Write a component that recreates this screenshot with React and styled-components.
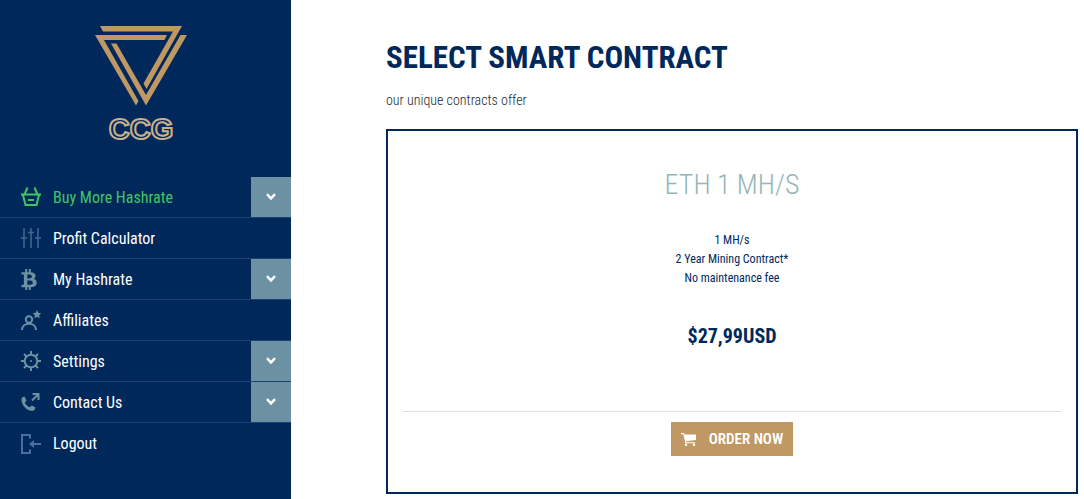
import React from 'react'
import styled, { createGlobalStyle } from 'styled-components'
import { FaBtc } from 'react-icons/fa'

const navy = '#00285b'
const teal = '#6b91a2'
const gold = '#bf9864'

const GlobalStyle = createGlobalStyle`
  * {
    box-sizing: border-box;
  }

  body {
    margin: 0;
    background: #fff;
    color: ${navy};
    font-family: 'Roboto Condensed', 'Liberation Sans Narrow', 'Liberation Sans', sans-serif;
  }
`

const Layout = styled.div`
  display: flex;
  min-height: 100vh;
`

const Sidebar = styled.aside`
  flex: 0 0 291px;
  background: ${navy};
`

const LogoLink = styled.a`
  display: flex;
  justify-content: center;
  padding: 25px 9px 20px 0;
`

const LogoText = styled.text`
  font-family: 'Liberation Sans', sans-serif;
  font-size: 29px;
  font-weight: 700;
  fill: ${navy};
  stroke: #c9b08a;
  stroke-width: 2px;
`

const Menu = styled.ul`
  margin: 0;
  padding: 0;
  list-style: none;
`

const MenuRow = styled.li`
  display: flex;
  height: 41px;
  border-bottom: 1px solid #1b4273;

  &:last-child {
    border-bottom: 0;
  }
`

const MenuLink = styled.a`
  display: flex;
  flex: 1;
  align-items: center;
  gap: 12px;
  padding-left: 21px;
  color: ${props => (props.$active ? '#41c565' : '#fff')};
  font-size: 16px;
  text-decoration: none;
`

const IconSlot = styled.span`
  display: flex;
  align-items: center;
  width: 20px;
  height: 20px;
  color: ${props => props.$color || teal};
`

const BitcoinIcon = styled(FaBtc)`
  width: 16px;
  height: 21px;
`

const Toggle = styled.button`
  display: flex;
  width: 40px;
  align-items: center;
  justify-content: center;
  padding: 0;
  border: 0;
  background: ${teal};
  cursor: pointer;
`

const Main = styled.main`
  flex: 1;
  padding: 38px 6px 6px 95px;
`

const Title = styled.h1`
  margin: 0;
  font-size: 31px;
  line-height: 40px;
  text-transform: uppercase;
`

const Subtitle = styled.p`
  margin: 12px 0 19px;
  color: #23282f;
  font-size: 14px;
  font-weight: 300;
  line-height: 20px;
`

const Card = styled.section`
  padding: 36px 15px;
  border: 2px solid ${navy};
  text-align: center;
`

const CardTitle = styled.h2`
  margin: 0;
  color: #94b6b6;
  font-size: 28px;
  font-weight: 300;
  line-height: 36px;
`

const Specs = styled.ul`
  margin: 28px 0 36px;
  padding: 0;
  font-size: 12px;
  line-height: 19px;
  list-style: none;
`

const Price = styled.p`
  margin: 0;
  font-size: 20px;
  font-weight: 700;
  line-height: 24px;
`

const Divider = styled.hr`
  margin: 63px 0 10px;
  border: 0;
  border-top: 1px solid #dddfe2;
`

const OrderButton = styled.button`
  display: inline-flex;
  height: 34px;
  align-items: center;
  gap: 13px;
  padding: 0 10px;
  border: 0;
  background: ${gold};
  color: #fff;
  font-family: inherit;
  font-size: 15px;
  font-weight: 600;
  cursor: pointer;
`

const Logo = () => (
  <svg width='92' height='132' viewBox='0 0 92 132' role='img' aria-label='CCG'>
    <g fill={gold}>
      <path d='M5 1H87L51.500 64L48.500 58.500L78 6.500H8Z' />
      <path d='M0 10H72L69.500 15H9L43.500 76L41 80.500Z' />
      <path d='M16 18.500H21.500L51 70L85.500 10H92L51 80.500Z' />
    </g>
    <LogoText x='46' y='114' textAnchor='middle'>CCG</LogoText>
  </svg>
)

const Line = ({ children, width = 2 }) => (
  <svg
    width='20'
    height='20'
    viewBox='0 0 20 20'
    fill='none'
    stroke='currentColor'
    strokeWidth={width}
    aria-hidden='true'
  >
    {children}
  </svg>
)

const BasketIcon = () => (
  <Line>
    <path d='M6.500 .5L3.500 7.500M13.500 .5L16.500 7.500M0 7.500H20M2 8L4.500 18H15.500L18 8M7 13H13' />
  </Line>
)

const SlidersIcon = () => (
  <Line width={1.5}>
    <path d='M3 0V20M10 0V20M17 0V20M0 10H6M7 4.500H13M14 10H20' />
  </Line>
)

const AffiliateIcon = () => (
  <Line>
    <circle cx='8' cy='9.500' r='3.200' />
    <path d='M1 20C1 11.500 15 11.500 15 20' />
    <path
      d='M16 0L17.300 2.800L20.300 3.200L18.100 5.300L18.700 8.300L16 6.800L13.300 8.300L13.900 5.300L11.700 3.200L14.700 2.800Z'
      fill='currentColor'
      stroke='none'
    />
  </Line>
)

const GearIcon = () => (
  <Line>
    <circle cx='10' cy='10' r='6.300' />
    <circle cx='10' cy='10' r='1' fill='currentColor' stroke='none' />
    <path d='M10 0V4M10 16V20M0 10H4M16 10H20M3 3L5.500 5.500M14.500 14.500L17 17M3 17L5.500 14.500M14.500 5.500L17 3' />
  </Line>
)

const PhoneIcon = () => (
  <Line>
    <path
      d='M1 5.500L3.500 4.500L5.500 8.500L3.800 10.500C5 13 6.500 14.300 8.800 15.200L10.800 13.500L14.500 15.500L13.500 18C11.500 19.500 8 19 5 16.500C1.500 13.500 -.5 9 1 5.500Z'
      fill='currentColor'
      stroke='none'
    />
    <path d='M11 8.500L17 2.500M11.500 2H17.500V8' />
  </Line>
)

const LogoutIcon = () => (
  <Line>
    <path d='M9 4.500V1H1V19H9V15.500M12 10H20' />
    <path d='M8 10L13 6V14Z' fill='currentColor' stroke='none' />
  </Line>
)

const CartIcon = () => (
  <svg width='15' height='13' viewBox='0 0 15 13' fill='currentColor' aria-hidden='true'>
    <path d='M0 0H3L3.500 1.500H15V7L5 8.200V9.300H14V10.300H4V8.500L2.300 1.200H0Z' />
    <circle cx='5' cy='11.700' r='1.300' />
    <circle cx='13' cy='11.700' r='1.300' />
  </svg>
)

const Chevron = () => (
  <svg width='10' height='8' viewBox='0 0 10 8' fill='none' stroke='#fff' strokeWidth='2.400' aria-hidden='true'>
    <path d='M1 1.200L5 5.400L9 1.200' />
  </svg>
)

const items = [
  { label: 'Buy More Hashrate', icon: <BasketIcon />, color: '#41c565', active: true, sub: true },
  { label: 'Profit Calculator', icon: <SlidersIcon />, color: '#416993' },
  { label: 'My Hashrate', icon: <BitcoinIcon />, sub: true },
  { label: 'Affiliates', icon: <AffiliateIcon /> },
  { label: 'Settings', icon: <GearIcon />, sub: true },
  { label: 'Contact Us', icon: <PhoneIcon />, sub: true },
  { label: 'Logout', icon: <LogoutIcon />, color: '#48709a' }
]

const specs = ['1 MH/s', '2 Year Mining Contract*', 'No maintenance fee']

const App = () => (
  <Layout>
    <GlobalStyle />
    <Sidebar>
      <LogoLink href='#home'>
        <Logo />
      </LogoLink>
      <nav>
        <Menu>
          {items.map(item => (
            <MenuRow key={item.label}>
              <MenuLink href='#menu' $active={item.active}>
                <IconSlot $color={item.color}>{item.icon}</IconSlot>
                {item.label}
              </MenuLink>
              {item.sub && (
                <Toggle type='button' aria-label={`Expand ${item.label}`}>
                  <Chevron />
                </Toggle>
              )}
            </MenuRow>
          ))}
        </Menu>
      </nav>
    </Sidebar>
    <Main>
      <Title>Select smart contract</Title>
      <Subtitle>our unique contracts offer</Subtitle>
      <Card>
        <CardTitle>ETH 1 MH/S</CardTitle>
        <Specs>
          {specs.map(spec => <li key={spec}>{spec}</li>)}
        </Specs>
        <Price>$27,99USD</Price>
        <Divider />
        <OrderButton type='button'>
          <CartIcon />
          ORDER NOW
        </OrderButton>
      </Card>
    </Main>
  </Layout>
)

export default App
